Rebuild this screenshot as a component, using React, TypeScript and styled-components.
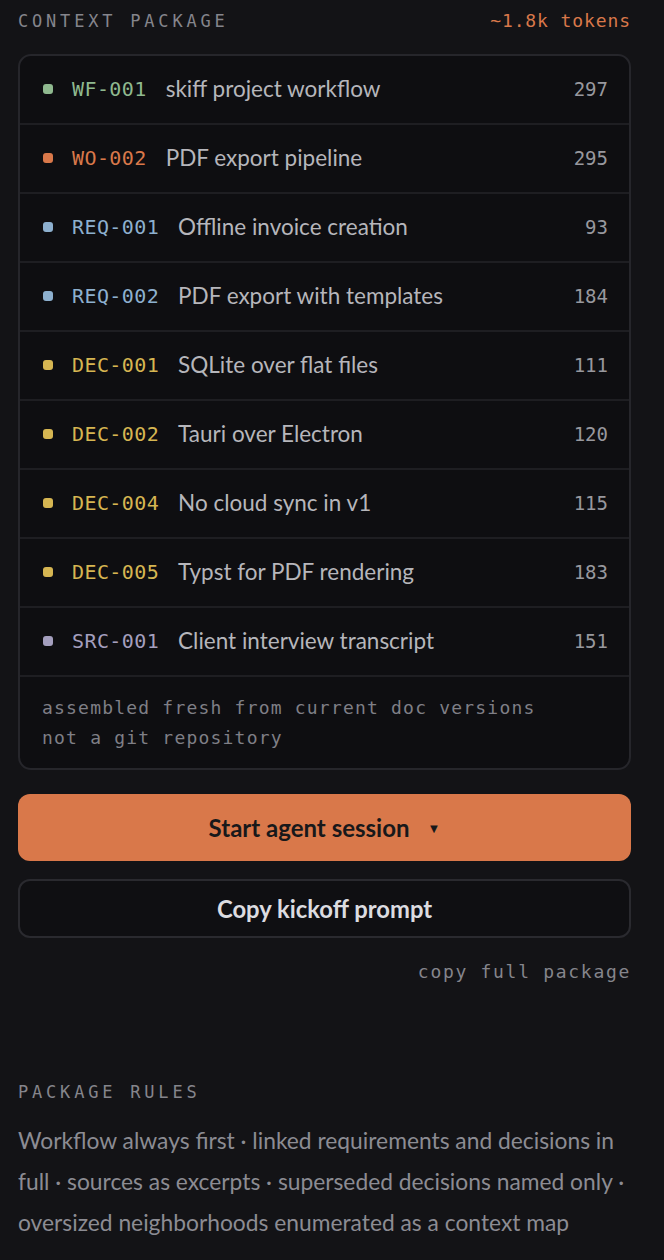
import React from 'react'
import styled, { createGlobalStyle } from 'styled-components'

const GlobalStyle = createGlobalStyle`
  html, body {
    margin: 0;
    padding: 0;
    background: #131316;
  }
  * { box-sizing: border-box; }
`

const mono = `"DejaVu Sans Mono", "Liberation Mono", monospace`
const sans = `Lato, "Noto Sans", sans-serif`

const Page = styled.div`
  width: 664px;
  min-height: 1260px;
  padding: 10px 33px 0 18px;
  background: #131316;
  font-family: ${sans};
`

const SectionHead = styled.div`
  display: flex;
  justify-content: space-between;
  align-items: baseline;
  height: 28px;
`

const Label = styled.div`
  font-family: ${mono};
  font-size: 17px;
  letter-spacing: 3.8px;
  color: #85858c;
  text-transform: uppercase;
`

const Tokens = styled.div`
  font-family: ${mono};
  font-size: 18px;
  letter-spacing: 0.9px;
  color: #d9784a;
`

const Card = styled.div`
  margin-top: 16px;
  background: #0e0e11;
  border: 2px solid #26262b;
  border-radius: 13px;
  overflow: hidden;
`

const Row = styled.div`
  display: flex;
  align-items: center;
  height: 69px;
  padding: 0 21px 2px 23px;
  border-bottom: 2px solid #1e1e22;
`

const Dot = styled.span<{ $c: string }>`
  width: 10px;
  height: 10px;
  border-radius: 3px;
  background: ${({ $c }) => $c};
  flex: none;
  margin-right: 19px;
`

const Id = styled.span<{ $c: string }>`
  font-family: ${mono};
  font-size: 20px;
  letter-spacing: 0.4px;
  color: ${({ $c }) => $c};
  margin-right: 19px;
`

const Title = styled.span`
  flex: 1;
  font-size: 22.5px;
  color: #b6b6bb;
`

const Count = styled.span`
  font-family: ${mono};
  font-size: 19px;
  color: #98989e;
`

const Footer = styled.div`
  padding: 16px 22px 15px 22px;
  font-family: ${mono};
  font-size: 18px;
  letter-spacing: 1.2px;
  line-height: 30px;
  color: #7f7f86;
`

const PrimaryButton = styled.button`
  display: flex;
  align-items: center;
  justify-content: center;
  gap: 18px;
  width: 100%;
  height: 67px;
  margin-top: 24px;
  border: none;
  border-radius: 12px;
  background: #d9784a;
  color: #18181a;
  font-family: ${sans};
  font-weight: 700;
  font-size: 24px;
`

const Caret = styled.span`
  font-size: 13px;
`

const SecondaryButton = styled.button`
  display: flex;
  align-items: center;
  justify-content: center;
  width: 100%;
  height: 59px;
  margin-top: 18px;
  border: 2px solid #2a2a2f;
  border-radius: 12px;
  background: #0f0f12;
  color: #dcdce0;
  font-family: ${sans};
  font-weight: 700;
  font-size: 23.8px;
`

const CopyLink = styled.div`
  margin-top: 23px;
  text-align: right;
  font-family: ${mono};
  font-size: 18px;
  letter-spacing: 1.7px;
  color: #85858c;
`

const Rules = styled.div`
  margin-top: 100px;
`

const RulesText = styled.p`
  margin: 18px 0 0;
  font-size: 22.8px;
  line-height: 41px;
  color: #8c8c93;
`

const COLORS = {
  WF: '#8fb98f',
  WO: '#d9784a',
  REQ: '#8db0cf',
  DEC: '#d6b652',
  SRC: '#a49fbe',
}

const docs: { id: string; kind: keyof typeof COLORS; title: string; n: number }[] = [
  { id: 'WF-001', kind: 'WF', title: 'skiff project workflow', n: 297 },
  { id: 'WO-002', kind: 'WO', title: 'PDF export pipeline', n: 295 },
  { id: 'REQ-001', kind: 'REQ', title: 'Offline invoice creation', n: 93 },
  { id: 'REQ-002', kind: 'REQ', title: 'PDF export with templates', n: 184 },
  { id: 'DEC-001', kind: 'DEC', title: 'SQLite over flat files', n: 111 },
  { id: 'DEC-002', kind: 'DEC', title: 'Tauri over Electron', n: 120 },
  { id: 'DEC-004', kind: 'DEC', title: 'No cloud sync in v1', n: 115 },
  { id: 'DEC-005', kind: 'DEC', title: 'Typst for PDF rendering', n: 183 },
  { id: 'SRC-001', kind: 'SRC', title: 'Client interview transcript', n: 151 },
]

export default function App() {
  return (
    <Page>
      <GlobalStyle />
      <SectionHead>
        <Label>Context package</Label>
        <Tokens>~1.8k tokens</Tokens>
      </SectionHead>
      <Card>
        {docs.map((d) => (
          <Row key={d.id}>
            <Dot $c={COLORS[d.kind]} />
            <Id $c={COLORS[d.kind]}>{d.id}</Id>
            <Title>{d.title}</Title>
            <Count>{d.n}</Count>
          </Row>
        ))}
        <Footer>
          assembled fresh from current doc versions
          <br />
          not a git repository
        </Footer>
      </Card>
      <PrimaryButton>
        Start agent session <Caret>▼</Caret>
      </PrimaryButton>
      <SecondaryButton>Copy kickoff prompt</SecondaryButton>
      <CopyLink>copy full package</CopyLink>
      <Rules>
        <Label>Package rules</Label>
        <RulesText>
          Workflow always first · linked requirements and decisions in full · sources as excerpts ·
          superseded decisions named only · oversized neighborhoods enumerated as a context map
        </RulesText>
      </Rules>
    </Page>
  )
}
